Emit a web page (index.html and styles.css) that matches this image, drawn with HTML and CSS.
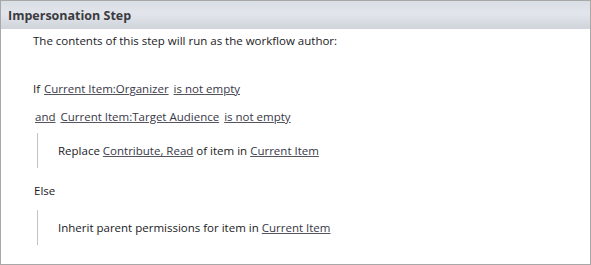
FILE: index.html
```html
<!DOCTYPE html>
<html>
<head lang="en">
	<meta charset="UTF-8">
	<title>Impersonation Step</title>
	<link rel="stylesheet" href="styles.css">
</head>
<body>

<div class="step">
	<div class="step-head">Impersonation Step</div>
	<div class="step-body">
		<p class="intro">The contents of this step will run as the workflow author:</p>

		<p class="cond">If <a href="#">Current Item:Organizer</a> <a href="#">is not empty</a></p>
		<p class="cond and"><a href="#">and</a> <a href="#">Current Item:Target Audience</a> <a href="#">is not empty</a></p>

		<div class="branch">
			<p>Replace <a href="#">Contribute, Read</a> of item in <a href="#">Current Item</a></p>
		</div>

		<p class="else">Else</p>

		<div class="branch">
			<p>Inherit parent permissions for item in <a href="#">Current Item</a></p>
		</div>
	</div>
</div>

</body>
</html>
```

FILE: styles.css
```css
* {
	box-sizing: border-box;
	margin: 0;
	padding: 0;
}

html, body {
	height: 100%;
}

body {
	font-family: "Open Sans", "Noto Sans", sans-serif;
	font-size: 11.5px;
	color: #1a1a24;
	background: #fff;
}

.step {
	height: 265px;
	border: 1px solid #a8a8a8;
	display: flex;
	flex-direction: column;
}

.step-head {
	height: 28px;
	padding: 0 7px;
	display: flex;
	align-items: center;
	font-weight: bold;
	font-size: 12.5px;
	color: #3b3b40;
	background: linear-gradient(#d9dde4, #e2e6ec 45%, #cfd3da);
}

.step-body {
	padding: 3px 0 0 32px;
}

p {
	white-space: nowrap;
	line-height: 17px;
}

a {
	color: #383848;
	text-decoration: underline;
	text-decoration-color: #55555f;
}

.intro {
	margin-bottom: 31px;
}

.cond {
	margin-bottom: 11px;
}

.cond a {
	margin: 0 1px;
}

.cond.and {
	margin-left: 1px;
	margin-bottom: 8px;
}

.branch {
	margin-left: 4px;
	border-left: 1px solid #c2c2cc;
	height: 35px;
	display: flex;
	align-items: center;
	padding-left: 20px;
}

.else {
	margin: 14px 0 11px 1px;
}
```
